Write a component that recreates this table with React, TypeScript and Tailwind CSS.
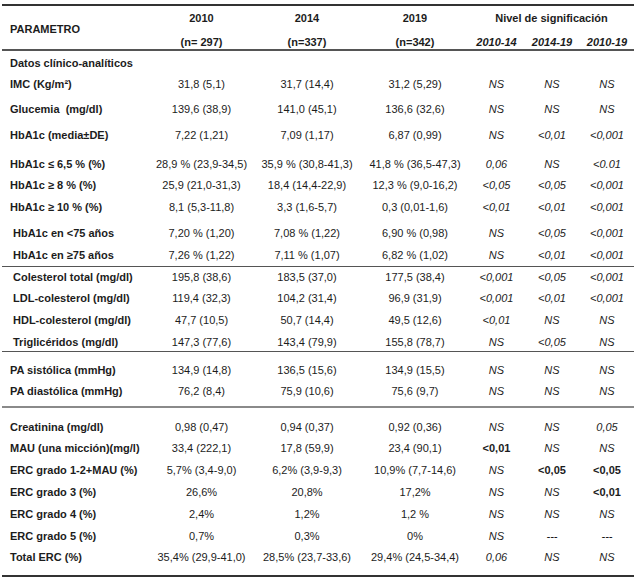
type Row = {
  label: string;
  indent?: boolean;
  h: string;
  vals?: string[];
  sig?: string[];
};

const cols = "grid grid-cols-[146px_107px_104px_112px_51px_60px_50px]";

const seg1: Row[] = [
  { label: "Datos clínico-analíticos", h: "h-[21px]" },
  { label: "IMC (Kg/m²)", h: "h-[25px]", vals: ["31,8 (5,1)", "31,7 (14,4)", "31,2 (5,29)"], sig: ["NS", "NS", "NS"] },
  { label: "Glucemia  (mg/dl)", h: "h-[26px]", vals: ["139,6 (38,9)", "141,0 (45,1)", "136,6 (32,6)"], sig: ["NS", "NS", "NS"] },
  { label: "HbA1c (media±DE)", h: "h-[29px]", vals: ["7,22 (1,21)", "7,09 (1,17)", "6,87 (0,99)"], sig: ["NS", "<0,01", "<0,001"] },
  { label: "HbA1c ≤ 6,5 % (%)", h: "h-[21px]", vals: ["28,9 % (23,9-34,5)", "35,9 % (30,8-41,3)", "41,8 % (36,5-47,3)"], sig: ["0,06", "NS", "<0.01"] },
  { label: "HbA1c ≥ 8 % (%)", h: "h-[22px]", vals: ["25,9 (21,0-31,3)", "18,4 (14,4-22,9)", "12,3 % (9,0-16,2)"], sig: ["<0,05", "<0,05", "<0,001"] },
  { label: "HbA1c ≥ 10 % (%)", h: "h-[26px]", vals: ["8,1 (5,3-11,8)", "3,3 (1,6-5,7)", "0,3 (0,01-1,6)"], sig: ["<0,01", "<0,01", "<0,001"] },
  { label: "HbA1c en <75 años", indent: true, h: "h-[22px]", vals: ["7,20 % (1,20)", "7,08 % (1,22)", "6,90 % (0,98)"], sig: ["NS", "<0,05", "<0,001"] },
  { label: "HbA1c en ≥75 años", indent: true, h: "h-[21px]", vals: ["7,26 % (1,22)", "7,11 % (1,07)", "6,82 % (1,02)"], sig: ["NS", "<0,01", "<0,001"] },
];

const seg2: Row[] = [
  { label: "Colesterol total (mg/dl)", indent: true, h: "h-[21px]", vals: ["195,8 (38,6)", "183,5 (37,0)", "177,5 (38,4)"], sig: ["<0,001", "<0,05", "<0,001"] },
  { label: "LDL-colesterol (mg/dl)", indent: true, h: "h-[22px]", vals: ["119,4 (32,3)", "104,2 (31,4)", "96,9 (31,9)"], sig: ["<0,001", "<0,01", "<0,001"] },
  { label: "HDL-colesterol (mg/dl)", indent: true, h: "h-[22px]", vals: ["47,7 (10,5)", "50,7 (14,4)", "49,5 (12,6)"], sig: ["<0,01", "NS", "NS"] },
  { label: "Triglicéridos (mg/dl)", indent: true, h: "h-[19px]", vals: ["147,3 (77,6)", "143,4 (79,9)", "155,8 (78,7)"], sig: ["NS", "<0,05", "NS"] },
];

const seg3: Row[] = [
  { label: "PA sistólica (mmHg)", h: "h-[21px]", vals: ["134,9 (14,8)", "136,5 (15,6)", "134,9 (15,5)"], sig: ["NS", "NS", "NS"] },
  { label: "PA diastólica (mmHg)", h: "h-[25px]", vals: ["76,2 (8,4)", "75,9 (10,6)", "75,6 (9,7)"], sig: ["NS", "NS", "NS"] },
];

// "*" marks a bold, upright p value
const seg4: Row[] = [
  { label: "Creatinina (mg/dl)", h: "h-[21px]", vals: ["0,98 (0,47)", "0,94 (0,37)", "0,92 (0,36)"], sig: ["NS", "NS", "0,05"] },
  { label: "MAU (una micción)(mg/l)", h: "h-[22px]", vals: ["33,4 (222,1)", "17,8 (59,9)", "23,4 (90,1)"], sig: ["*<0,01", "NS", "NS"] },
  { label: "ERC grado 1-2+MAU (%)", h: "h-[22px]", vals: ["5,7% (3,4-9,0)", "6,2% (3,9-9,3)", "10,9% (7,7-14,6)"], sig: ["NS", "*<0,05", "*<0,05"] },
  { label: "ERC grado 3 (%)", h: "h-[22px]", vals: ["26,6%", "20,8%", "17,2%"], sig: ["NS", "NS", "*<0,01"] },
  { label: "ERC grado 4 (%)", h: "h-[22px]", vals: ["2,4%", "1,2%", "1,2 %"], sig: ["NS", "NS", "NS"] },
  { label: "ERC grado 5 (%)", h: "h-[21px]", vals: ["0,7%", "0,3%", "0%"], sig: ["NS", "---", "---"] },
  { label: "Total ERC (%)", h: "h-[28px]", vals: ["35,4% (29,9-41,0)", "28,5% (23,7-33,6)", "29,4% (24,5-34,4)"], sig: ["0,06", "NS", "NS"] },
];

function DataRow({ row }: { row: Row }) {
  return (
    <div className={`${cols} ${row.h} items-start pt-[4px]`}>
      <div className={`whitespace-pre font-bold ${row.indent ? "pl-[11px]" : "pl-[8px]"}`}>{row.label}</div>
      {row.vals?.map((v, i) => (
        <div key={i} className="flex justify-center whitespace-nowrap">
          {v}
        </div>
      ))}
      {row.sig?.map((s, i) => (
        <div key={"s" + i} className="flex justify-center whitespace-nowrap">
          {s.startsWith("*") ? <span className="font-bold">{s.slice(1)}</span> : <span className="italic">{s}</span>}
        </div>
      ))}
    </div>
  );
}

export default function App() {
  return (
    <div className="w-[639px] h-[581px] bg-white pt-[4px] pl-[2px] font-['Liberation_Sans',Arial,sans-serif] text-[11px] leading-[13px] text-[#1c1c1c]">
      <div className="w-[632px]">
        <div className="h-[2px] bg-[#333]" />

        <div className={`${cols} grid-rows-[24px_19px] font-bold`}>
          <div className="row-span-2 flex items-center pl-[8px] pt-[3px]">PARAMETRO</div>
          <div className="flex justify-center pt-[5.5px]">2010</div>
          <div className="flex justify-center pt-[5.5px]">2014</div>
          <div className="flex justify-center pt-[5.5px]">2019</div>
          <div className="col-span-3 flex justify-center pt-[5.5px] whitespace-nowrap">Nivel de significación</div>
          <div className="flex justify-center pt-[6px]">(n= 297)</div>
          <div className="flex justify-center pt-[6px]">(n=337)</div>
          <div className="flex justify-center pt-[6px]">(n=342)</div>
          <div className="flex justify-center pt-[6px] italic">2010-14</div>
          <div className="flex justify-center pt-[6px] italic">2014-19</div>
          <div className="flex justify-center pt-[6px] italic">2010-19</div>
        </div>
        <div className="h-[2px] bg-[#555]" />

        <div className="pt-[2px]">
          {seg1.map((r) => (
            <DataRow key={r.label} row={r} />
          ))}
        </div>
        <div className="h-px bg-[#555]" />

        <div>
          {seg2.map((r) => (
            <DataRow key={r.label} row={r} />
          ))}
        </div>
        <div className="h-px bg-[#555]" />

        <div className="pt-[8px]">
          {seg3.map((r) => (
            <DataRow key={r.label} row={r} />
          ))}
        </div>
        <div className="h-[2px] bg-[#8a8a8a]" />

        <div className="pt-[9px]">
          {seg4.map((r) => (
            <DataRow key={r.label} row={r} />
          ))}
        </div>
        <div className="h-[2px] bg-[#333]" />
      </div>
    </div>
  );
}
